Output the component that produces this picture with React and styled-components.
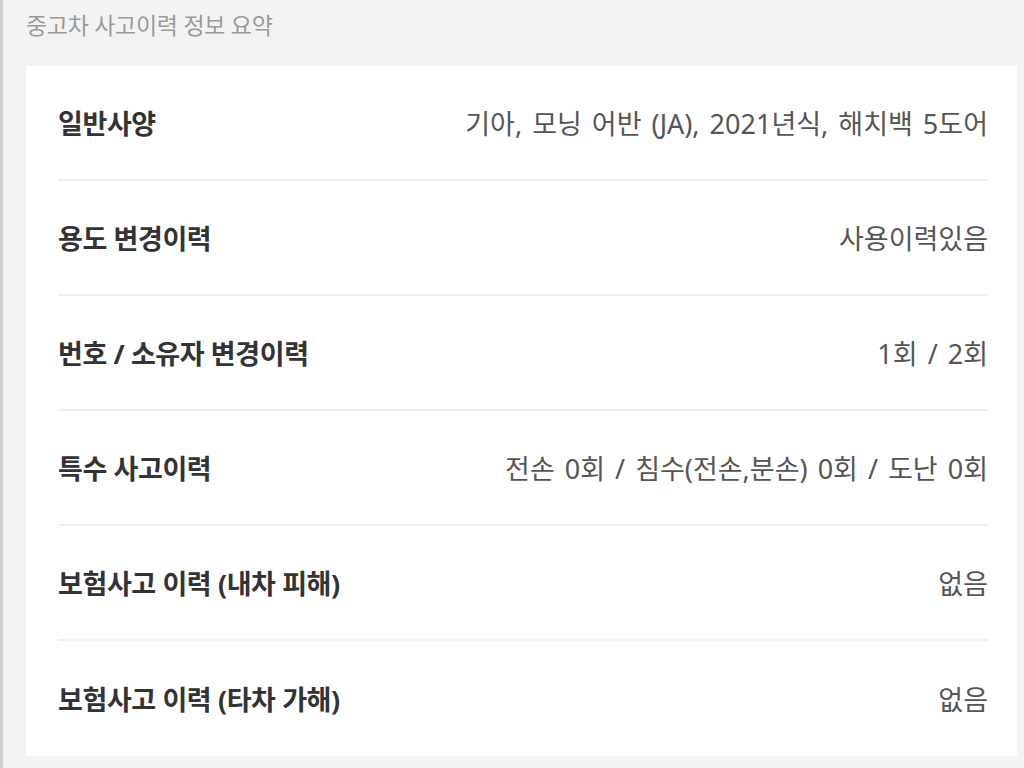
import styled, { createGlobalStyle } from "styled-components";

const GlobalStyle = createGlobalStyle`
  html, body {
    margin: 0;
    padding: 0;
    background: #f3f3f3;
  }
  body {
    font-family: "Noto Sans", "Noto Sans CJK KR", sans-serif;
  }
`;

const Page = styled.div`
  width: 1024px;
  height: 768px;
  box-sizing: border-box;
  border-left: 3px solid #cfcfcf;
  padding-left: 23px;
  padding-right: 7px;
  background: #f3f3f3;
  overflow: hidden;
`;

const Heading = styled.h1`
  margin: 0;
  height: 66px;
  padding-top: 7px;
  box-sizing: border-box;
  font-size: 23px;
  font-weight: 400;
  color: #9a9a9a;
  letter-spacing: -0.3px;
`;

const Card = styled.div`
  background: #fff;
  padding: 0 29px 0 32px;
`;

const Row = styled.div`
  display: flex;
  align-items: center;
  justify-content: space-between;
  height: 115px;
  box-sizing: border-box;
  border-bottom: 2px solid #efefef;

  &:last-child {
    border-bottom: none;
  }
`;

const Label = styled.span`
  font-size: 27px;
  font-weight: 700;
  color: #333;
  letter-spacing: -0.4px;
`;

const Value = styled.span`
  font-size: 27px;
  font-weight: 400;
  color: #555;
  word-spacing: 3px;
`;

const rows = [
  { label: "일반사양", value: "기아, 모닝 어반 (JA), 2021년식, 해치백 5도어" },
  { label: "용도 변경이력", value: "사용이력있음" },
  { label: "번호 / 소유자 변경이력", value: "1회 / 2회" },
  { label: "특수 사고이력", value: "전손 0회 / 침수(전손,분손) 0회 / 도난 0회" },
  { label: "보험사고 이력 (내차 피해)", value: "없음" },
  { label: "보험사고 이력 (타차 가해)", value: "없음" },
];

export default function App() {
  return (
    <Page>
      <GlobalStyle />
      <Heading>중고차 사고이력 정보 요약</Heading>
      <Card>
        {rows.map((row) => (
          <Row key={row.label}>
            <Label>{row.label}</Label>
            <Value>{row.value}</Value>
          </Row>
        ))}
      </Card>
    </Page>
  );
}
